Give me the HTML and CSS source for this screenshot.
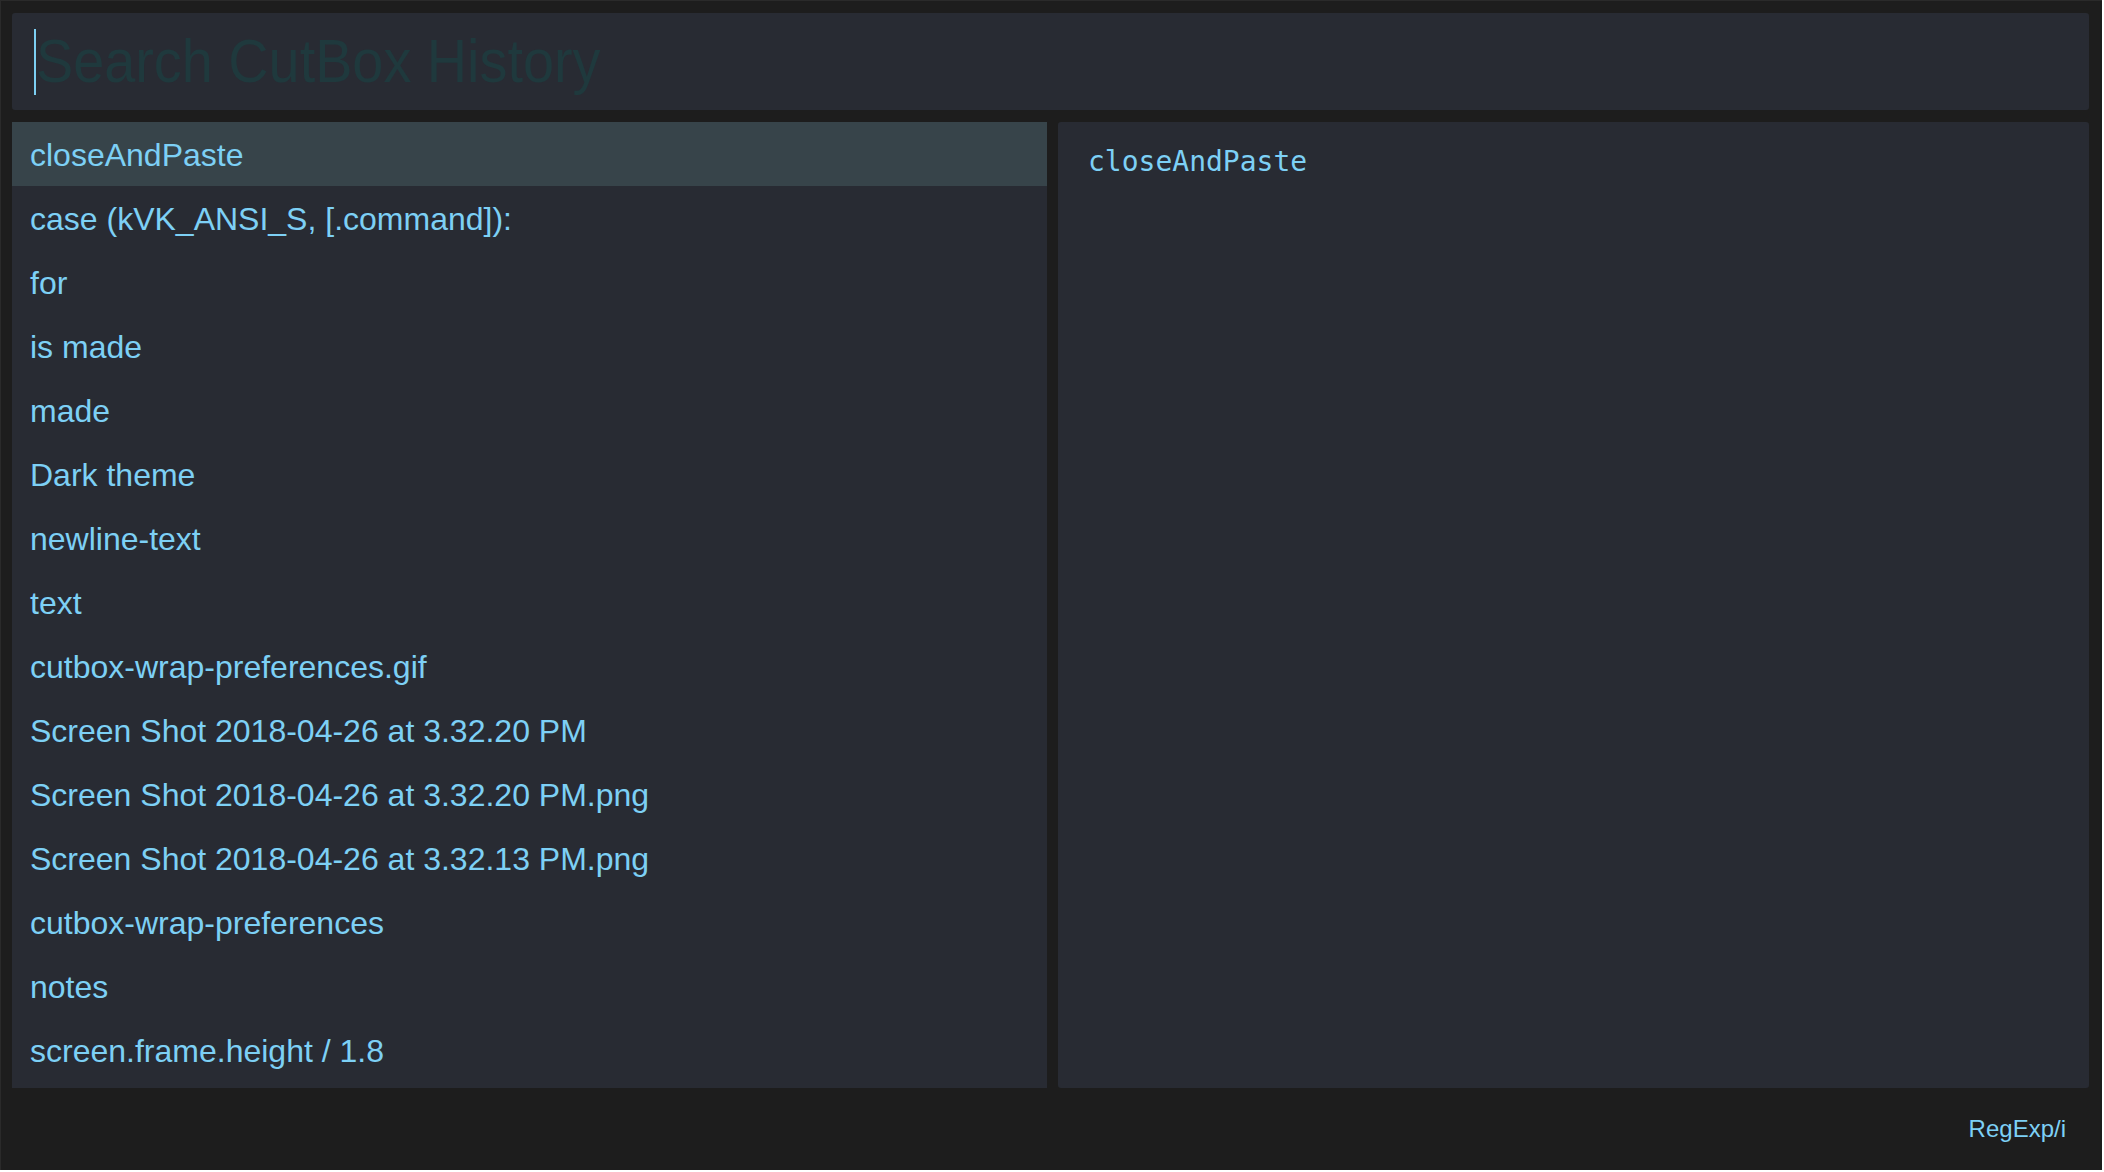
FILE: index.html
```html
<!DOCTYPE html>
<html>
<head>
<meta charset="utf-8">
<title>CutBox</title>
<link rel="stylesheet" href="styles.css">
</head>
<body>
<div class="window">
  <div class="search">
    <span class="caret"></span>
    <span class="placeholder">Search CutBox History</span>
  </div>
  <div class="content">
    <ul class="list">
      <li class="item selected">closeAndPaste</li>
      <li class="item">case (kVK_ANSI_S, [.command]):</li>
      <li class="item">for</li>
      <li class="item">is made</li>
      <li class="item">made</li>
      <li class="item">Dark theme</li>
      <li class="item">newline-text</li>
      <li class="item">text</li>
      <li class="item">cutbox-wrap-preferences.gif</li>
      <li class="item">Screen Shot 2018-04-26 at 3.32.20 PM</li>
      <li class="item">Screen Shot 2018-04-26 at 3.32.20 PM.png</li>
      <li class="item">Screen Shot 2018-04-26 at 3.32.13 PM.png</li>
      <li class="item">cutbox-wrap-preferences</li>
      <li class="item">notes</li>
      <li class="item">screen.frame.height / 1.8</li>
    </ul>
    <div class="preview">
      <pre class="preview-text">closeAndPaste</pre>
    </div>
  </div>
  <div class="footer">
    <span class="mode">RegExp/i</span>
  </div>
</div>
</body>
</html>
```
FILE: styles.css
```css
html, body {
  margin: 0;
  padding: 0;
  background: #ffffff;
}

*, *::before, *::after {
  box-sizing: border-box;
}

.window {
  width: 2102px;
  height: 1170px;
  background: #1d1d1d;
  border-left: 1px solid #2a2a2a;
  border-top: 1px solid #2a2a2a;
  padding: 12px 13px 0 11px;
  display: flex;
  flex-direction: column;
  font-family: "Liberation Sans", Arial, sans-serif;
}

.search {
  height: 97px;
  flex: 0 0 97px;
  background: #282b33;
  border-radius: 3px;
  display: flex;
  align-items: center;
  padding-left: 22px;
  margin-bottom: 12px;
  overflow: hidden;
}

.caret {
  width: 2px;
  height: 66px;
  background: #7ccff3;
  flex: 0 0 2px;
}

.placeholder {
  font-family: "Liberation Sans Narrow", "Liberation Sans", Arial, sans-serif;
  font-size: 62px;
  line-height: 66px;
  color: #1f393d;
  white-space: nowrap;
  display: inline-block;
  transform: scaleX(0.9);
  transform-origin: left center;
  margin-top: -2px;
}

.content {
  display: flex;
  gap: 11px;
  height: 966px;
  flex: 0 0 966px;
}

.list {
  flex: 0 0 1035px;
  margin: 0;
  padding: 0;
  list-style: none;
  background: #282b33;
  overflow: hidden;
}

.item {
  height: 64px;
  line-height: 66px;
  padding-left: 18px;
  font-size: 32px;
  color: #7dd0f5;
  white-space: nowrap;
}

.item.selected {
  background: #37444a;
}

.preview {
  flex: 1 1 auto;
  background: #282b33;
  border-radius: 3px;
  padding: 23px 30px;
}

.preview-text {
  margin: 0;
  font-family: "DejaVu Sans Mono", "Liberation Mono", monospace;
  font-size: 28px;
  line-height: 34px;
  color: #7dd0f5;
}

.footer {
  flex: 1 1 auto;
  display: flex;
  align-items: center;
  justify-content: flex-end;
  padding-right: 23px;
}

.mode {
  font-size: 24px;
  color: #7dd0f5;
}
```
